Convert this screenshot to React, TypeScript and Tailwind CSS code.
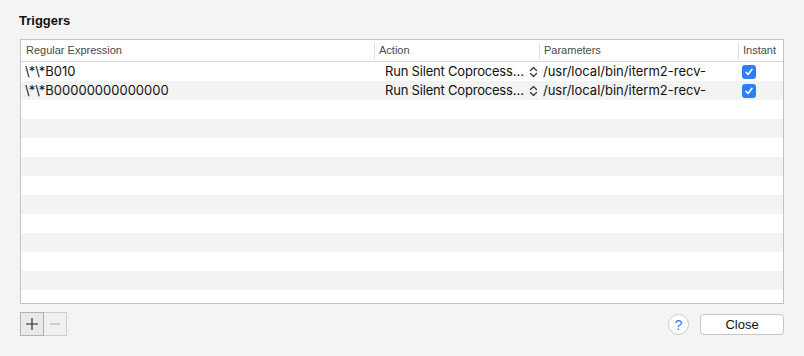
import React from "react";

const rows = [
  { re: "\\*\\*B010", action: "Run Silent Coprocess…", params: "/usr/local/bin/iterm2-recv-", instant: true },
  { re: "\\*\\*B00000000000000", action: "Run Silent Coprocess…", params: "/usr/local/bin/iterm2-recv-", instant: true },
];

function Chevrons() {
  return (
    <svg width="9" height="12" viewBox="0 0 9 12" className="shrink-0">
      <path d="M1.5 4.5 L4.5 1.5 L7.5 4.5" fill="none" stroke="#333" strokeWidth="1.2" strokeLinecap="round" strokeLinejoin="round" />
      <path d="M1.5 7.5 L4.5 10.5 L7.5 7.5" fill="none" stroke="#333" strokeWidth="1.2" strokeLinecap="round" strokeLinejoin="round" />
    </svg>
  );
}

function Check() {
  return (
    <div className="w-[14px] h-[14px] rounded-[3px] bg-[#2c7ff7] flex items-center justify-center">
      <svg width="10" height="10" viewBox="0 0 10 10">
        <path d="M2 5.3 L4.1 7.5 L8 2.3" fill="none" stroke="white" strokeWidth="1.6" strokeLinecap="round" strokeLinejoin="round" />
      </svg>
    </div>
  );
}

export default function App() {
  const total = 13;
  return (
    <div
      className="w-[804px] h-[356px] bg-[#f4f4f4] flex flex-col text-[#111] overflow-hidden"
      style={{ fontFamily: '"Liberation Sans", Arial, sans-serif' }}
    >
      <div className="pl-[19px] pt-[13px] h-[39px] text-[13px] font-bold leading-[16px]">Triggers</div>
      <div className="ml-[20px] w-[764px] h-[265px] border border-[#c3c3c3] bg-white overflow-hidden">
        <div className="grid grid-cols-[354px_165px_199px_1fr] h-[22px] border-b border-[#d9d9d9] text-[11px] text-[#4a4a4a]">
          <div className="pl-[5px] flex items-center">
            <span className="flex-1">Regular Expression</span>
            <span className="w-px h-[16px] bg-[#dedede]" />
          </div>
          <div className="pl-[4px] flex items-center">
            <span className="flex-1">Action</span>
            <span className="w-px h-[16px] bg-[#dedede]" />
          </div>
          <div className="pl-[4px] flex items-center">
            <span className="flex-1">Parameters</span>
            <span className="w-px h-[16px] bg-[#dedede]" />
          </div>
          <div className="pl-[4px] flex items-center">
            <span className="flex-1">Instant</span>
          </div>
        </div>
        {Array.from({ length: total }).map((_, i) => {
          const r = rows[i];
          return (
            <div
              key={i}
              className={
                "grid grid-cols-[354px_165px_199px_1fr] h-[19px] text-[13px] leading-[19px] font-['Inter',sans-serif] " +
                (i % 2 === 1 ? "bg-[#f3f3f3]" : "bg-white")
              }
            >
              {r ? (
                <>
                  <div className="pl-[4px] whitespace-nowrap">{r.re}</div>
                  <div className="pl-[10px] pr-[2px] flex items-center gap-[3px] whitespace-nowrap">
                    <span className="flex-1 min-w-0 overflow-hidden tracking-[-0.2px]">{r.action}</span>
                    <Chevrons />
                  </div>
                  <div className="pl-[3px] whitespace-nowrap overflow-hidden">{r.params}</div>
                  <div className="pl-[3px] flex items-center">{r.instant && <Check />}</div>
                </>
              ) : null}
            </div>
          );
        })}
      </div>
      <div className="flex items-start pl-[20px] pr-[20px] pt-[8px]">
        <div className="flex">
          <div className="w-[24px] h-[24px] border border-[#b3b3b3] bg-[#e9e9e9] flex items-center justify-center">
            <svg width="14" height="14" viewBox="0 0 14 14">
              <path d="M7 1 V13 M1 7 H13" stroke="#222" strokeWidth="1.1" />
            </svg>
          </div>
          <div className="w-[23px] h-[24px] border border-l-0 border-[#cdcdcd] bg-[#f0f0f0] flex items-center justify-center">
            <svg width="12" height="12" viewBox="0 0 12 12">
              <path d="M1 6 H11" stroke="#b0b0b0" strokeWidth="1.1" />
            </svg>
          </div>
        </div>
        <div className="flex-1" />
        <div className="mt-[2px] w-[21px] h-[21px] rounded-full border border-[#c9c9c9] bg-white flex items-center justify-center text-[14px] text-[#2a7cf6] leading-none">
          ?
        </div>
        <div className="ml-[11px] mt-[2px] w-[84px] h-[21px] rounded-[4px] border border-[#c6c6c6] bg-white flex items-center justify-center text-[13px] text-[#111]">
          Close
        </div>
      </div>
    </div>
  );
}
